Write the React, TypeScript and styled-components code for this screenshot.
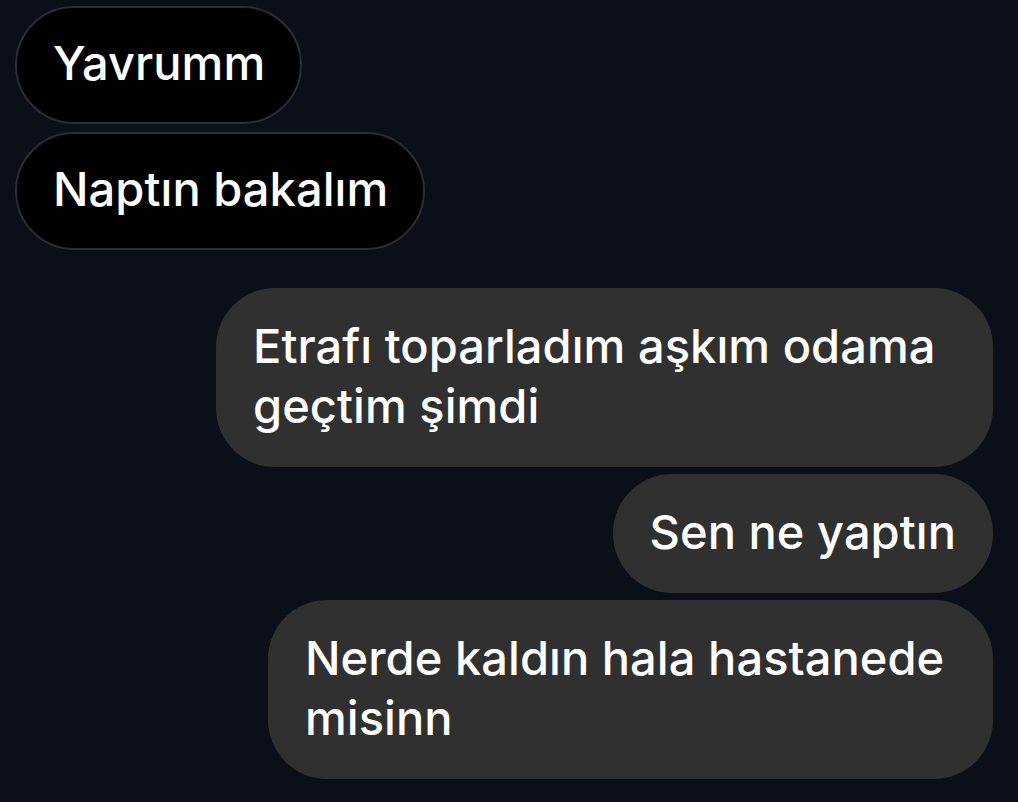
import React from "react";
import styled, { createGlobalStyle } from "styled-components";

const Global = createGlobalStyle`
  html, body {
    margin: 0;
    padding: 0;
    background: #0b0f17;
  }
  body {
    font-family: Inter, "Liberation Sans", Arial, sans-serif;
  }
`;

const Thread = styled.div`
  width: 1018px;
  height: 802px;
  box-sizing: border-box;
  padding: 6px 25px 0 15px;
  display: flex;
  flex-direction: column;
  background: #0b0f17;
  overflow: hidden;
`;

const Group = styled.div<{ $side: "in" | "out"; $top?: number }>`
  display: flex;
  flex-direction: column;
  align-items: ${(p) => (p.$side === "in" ? "flex-start" : "flex-end")};
  gap: ${(p) => (p.$side === "in" ? 8 : 7)}px;
  margin-top: ${(p) => p.$top ?? 0}px;
`;

const Bubble = styled.div<{ $side: "in" | "out"; $width?: number }>`
  box-sizing: border-box;
  width: ${(p) => (p.$width ? `${p.$width}px` : "fit-content")};
  padding: ${(p) => (p.$side === "in" ? "25px 35px 29px 36px" : "28px 37px 31px")};
  border-radius: 59px;
  background: ${(p) => (p.$side === "in" ? "#000000" : "#303030")};
  border: ${(p) => (p.$side === "in" ? "2px solid #2a2d33" : "none")};
  color: #ffffff;
  font-size: 47px;
  font-weight: 500;
  line-height: 60px;
  letter-spacing: 0.05px;
`;

export default function App() {
  return (
    <>
      <Global />
      <Thread>
        <Group $side="in">
          <Bubble $side="in">Yavrumm</Bubble>
          <Bubble $side="in">Naptın bakalım</Bubble>
        </Group>
        <Group $side="out" $top={38}>
          <Bubble $side="out" $width={777}>
            Etrafı toparladım aşkım odama geçtim şimdi
          </Bubble>
          <Bubble $side="out">Sen ne yaptın</Bubble>
          <Bubble $side="out" $width={725}>
            Nerde kaldın hala hastanede misinn
          </Bubble>
        </Group>
      </Thread>
    </>
  );
}
